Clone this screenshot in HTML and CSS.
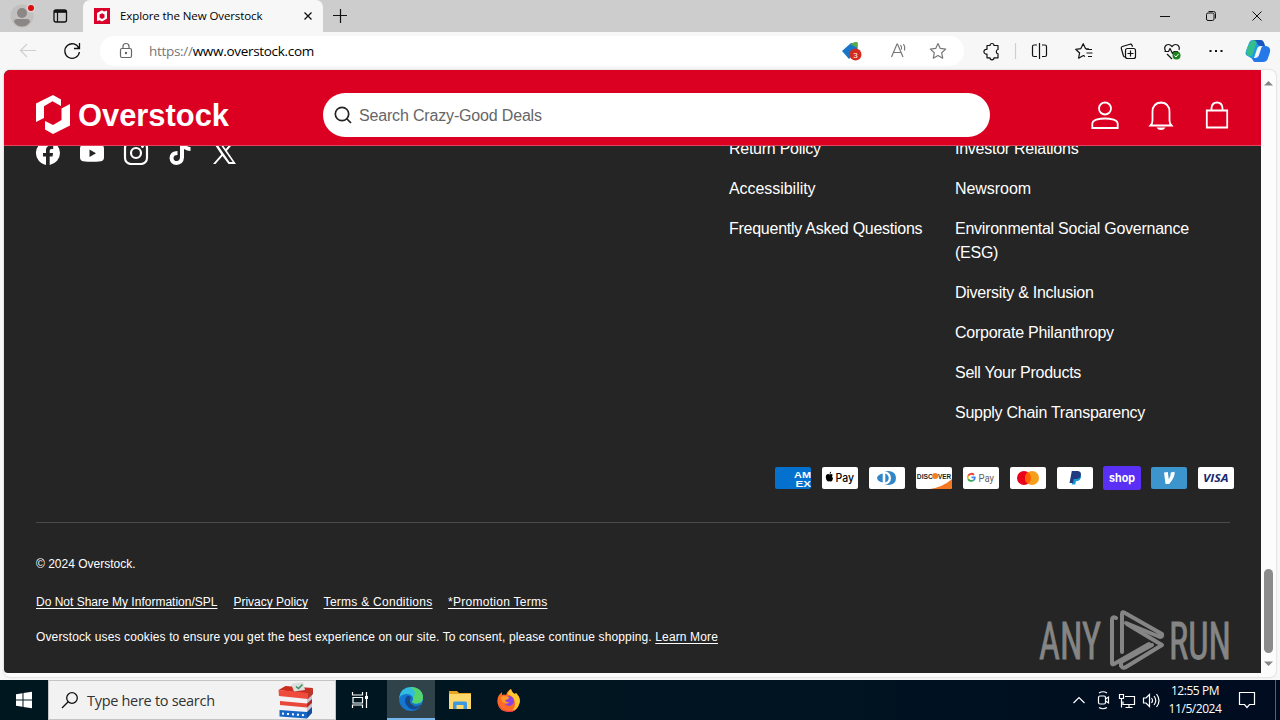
FILE: index.html
```html
<!DOCTYPE html>
<html lang="en">
<head>
    <meta charset="UTF-8">
    <meta name="viewport" content="width=device-width, initial-scale=1.0">
    <title>Explore the New Overstock</title>
    <link rel="stylesheet" href="styles.css">
</head>
<body>
    <div class="tab-strip">
        <svg class="profile" width="84" height="32" viewBox="0 0 84 32">
            <circle cx="22" cy="16" r="11.5" fill="#c2c0be"/>
            <circle cx="22" cy="13" r="5" fill="#8b8785"/>
            <path d="M14 22q0-3 3-3h10q3 0 3 3q-3 4.500-8 4.500t-8-4.500z" fill="#8b8785"/>
            <circle cx="31" cy="8" r="4.500" fill="#d6d4d3"/>
            <circle cx="31" cy="8" r="3" fill="#d80f12"/>
            <rect x="54" y="10" width="12.500" height="12" rx="2" fill="none" stroke="#111" stroke-width="1.300"/>
            <path d="M54 11.500h12.500" stroke="#111" stroke-width="2.600"/>
            <path d="M57.500 11v11" stroke="#111" stroke-width="1.200"/>
        </svg>
        <div class="tab">
            <svg width="16" height="16" viewBox="0 0 16 16">
                <rect width="16" height="16" fill="#d9002a"/>
                <path fill-rule="evenodd" d="M3 5l5-2.800 2 1.200 3-.7v7.800l-5 3-2.200-1.200-2.800.6zM8 5.200L5.600 6.600v3L8 11l2.500-1.400v-3z" fill="#fff"/>
            </svg>
            <span class="tab-title">Explore the New Overstock</span>
            <svg class="tab-close" width="10" height="10" viewBox="0 0 10 10"><path d="M1.500 1.500l7 7m0-7l-7 7" stroke="#111" stroke-width="1.300"/></svg>
        </div>
        <svg class="new-tab" width="14" height="14" viewBox="0 0 14 14"><path d="M0 6.500h14M7.500 0v14" stroke="#111" stroke-width="1.200"/></svg>
        <svg class="window-buttons" width="130" height="32" viewBox="1150 0 130 32" fill="none" stroke="#111">
            <path d="M1160 16.500h10M1252.500 11.500l9 9m0-9l-9 9"/>
            <rect x="1206.500" y="13" width="7.500" height="7.500" rx="1.500"/>
            <path d="M1208.500 11.500h5q2 0 2 2v5"/>
        </svg>
    </div>

    <div class="toolbar">
        <svg width="96" height="38" viewBox="0 32 96 38" fill="none">
            <path d="M36 50.500H21M27 44l-6.500 6.500L27 57" stroke="#cfcfcf" stroke-width="1.200"/>
            <path d="M79 48.500a7.300 7.300 0 1 0 .4 3.500M79.500 43v5.500H74" stroke="#111" stroke-width="1.300"/>
        </svg>
        <div class="address-bar">
            <svg class="lock" width="14" height="18" viewBox="0 0 14 18" fill="none" stroke="#666" stroke-width="1.200">
                <rect x="1.500" y="6.500" width="11" height="9" rx="1.500"/>
                <path d="M4 6.500V4.500a3 3 0 0 1 6 0v2"/>
                <circle cx="7" cy="11" r=".6" fill="#666"/>
            </svg>
            <span class="url"><span class="scheme">https://</span>www.overstock.com</span>
            <svg class="address-icons" width="124" height="30" viewBox="840 36 124 30" fill="none">
                <path d="M842 51l9-8h6.500v8l-8.500 8z" fill="#1875c9"/>
                <path d="M850 44l5-2h2.500v6z" fill="#59a94d"/>
                <circle cx="855.500" cy="54.500" r="6" fill="#d42b1e"/>
                <text x="855.500" y="58" class="badge-count">3</text>
                <path d="M891.500 57l5.500-13h.5l5.500 13M893.500 52.500h7.500M900.500 45q1.500 2 1 4.500M903.500 44q2 3 1 6.500" stroke="#777" stroke-width="1.200"/>
                <path d="M938 43.500l2.300 4.900 5.400.7-4 3.700 1 5.400-4.700-2.700-4.700 2.700 1-5.400-4-3.700 5.400-.7z" stroke="#777" stroke-width="1.200" stroke-linejoin="round"/>
            </svg>
        </div>
        <svg class="toolbar-icons" width="316" height="38" viewBox="964 32 316 38" fill="none" stroke="#111" stroke-width="1.200" stroke-linejoin="round">
            <path d="M987 45.500h3a2 2 0 0 1 4 0h4v4a2.200 2.200 0 0 0 0 4.300v4h-4a2 2 0 0 1-4 0h-3v-3.800a2.400 2.400 0 1 1 0-4.600z"/>
            <path d="M1015.500 43v16" stroke="#cfcfcf"/>
            <path d="M1037 45h-3q-1.500 0-1.500 1.500v8.500q0 1.500 1.500 1.500h3M1042 45h3q1.500 0 1.500 1.500v8.500q0 1.500-1.500 1.500h-3M1039.500 43v16"/>
            <path d="M1089 49l-3.500-.4-2.300-4.900-2.300 4.900-5.200.7 3.900 3.700-1 5.200 4.800-2.700 1.600 1M1086 49.500h6M1086.500 53h6M1088 56.500h4"/>
            <path d="M1126 57h-1q-1 0-1.500-1l-2.200-7.500q-.3-1.500 1-2l7.700-2.300q1.500-.3 2 1l.5 1.500"/>
            <rect x="1125.500" y="48.500" width="10" height="10" rx="2"/>
            <path d="M1130.500 50.500v6M1127.500 53.500h6"/>
            <path d="M1165.500 51q-2-4 1-6 3-1.500 5.500 1.500 2.500-3 5.500-1.500 2.500 1.500 1.500 5M1164.500 51.500h4l1.500-3 2.500 5 1.500-2h4M1167 54l5 5"/>
            <circle cx="1176.500" cy="55.500" r="4" fill="#1b8420" stroke="none"/>
            <path d="M1174.500 55.500l1.500 1.500 2.500-3" stroke="#fff" stroke-width="1"/>
            <path d="M1209.500 51h2M1215 51h2M1220.500 51h2" stroke-width="2"/>
            <g stroke="none">
                <path d="M1253 40h8q2 0 3 3l1 3h-4q-3 0-4 3l-3 9q-1 2-3 0l-5-3q-1-2 0-4l3-8q1-3 4-3z" fill="#1b9de2"/>
                <path d="M1247 48l3-5q1-3 4-3h5q-2 1-3 4l-4 12h-3q-4-1-2-8z" fill="#35bd8c"/>
                <path d="M1263 46h3q5 1 4 6l-2 6q-1 4-5 4h-8q-2 0-3-4h3q3 0 4-3l2-6q.5-3 2-3z" fill="#2478e8"/>
                <path d="M1253 40h7q3 0 4 3l1 3h-4q-3 0-4-3-1-3-4-3z" fill="#1b55bd"/>
            </g>
        </svg>
    </div>

    <div class="page-frame">
        <div class="page">
            <header class="site-header">
                <svg class="logo" width="200" height="44" viewBox="36 93 200 44" fill="#fff">
                    <path d="M36 103.500L53 95l8 4.500v6.500l-8.500-4.800-8.500 5V118l-8 4z"/>
                    <path d="M70 104v21.500L53 134l-8-4.500V121l8 4 8.500-5v-11.500z"/>
                    <text x="78" y="126" textLength="151" lengthAdjust="spacingAndGlyphs" class="logo-name">Overstock</text>
                </svg>
                <div class="search">
                    <svg width="18" height="18" viewBox="0 0 18 18" fill="none" stroke="#222" stroke-width="1.700"><circle cx="8" cy="8" r="6.700"/><path d="M12.500 12.500l4.500 4.500"/></svg>
                    <span>Search Crazy-Good Deals</span>
                </div>
                <svg class="header-icons" width="140" height="32" viewBox="1089 99 140 32" fill="none" stroke="#fff" stroke-width="1.800">
                    <circle cx="1105" cy="108.500" r="6"/>
                    <path d="M1092.300 128v-4q0-3 4-4.300 8.700-2.400 17.400 0 4 1.300 4 4.300v4z"/>
                    <path d="M1150.500 125.500q2-2 2-5V112q0-9 8.500-9.500 8.500.5 8.500 9.500v8.500q0 3 2 5z"/>
                    <path d="M1156.500 127.500h9q-1.500 2.500-4.500 2.500t-4.500-2.500z" fill="#fff" stroke="none"/>
                    <path d="M1206.800 110.500h20.400v17h-20.400zM1211.500 110v-2q.5-5.500 5.500-5.500t5.500 5.500v2"/>
                </svg>
            </header>
            <footer class="site-footer">
                <div class="footer-scroll">
                    <div class="footer-top">
                        <svg class="social" width="204" height="24" viewBox="36 141 204 24" fill="#fff">
                            <path d="M60 153a12 12 0 1 0-14 11.900v-8.400h-3V153h3v-2.700c0-3 1.800-4.700 4.600-4.700 1.300 0 2.600.3 2.600.3v3h-1.500c-1.500 0-2 .9-2 1.900v2.200h3.400l-.6 3.500h-2.800v8.400A12 12 0 0 0 60 153z"/>
                            <path fill-rule="evenodd" d="M83 144.700q9-1 18 0 3 .5 3 4v8.600q0 3.500-3 4-9 1-18 0-3-.5-3-4v-8.600q0-3.500 3-4zM89.500 149.500v7.500l6.500-3.700z"/>
                            <g fill="none" stroke="#fff" stroke-width="2.200"><rect x="125" y="142" width="22" height="22" rx="6"/><circle cx="136" cy="153" r="5"/></g>
                            <circle cx="142.500" cy="146.600" r="1.400"/>
                            <path d="M180 141h4q.5 5.500 6.500 6v4q-3.500 0-6.500-2v8.500q-.5 7-7.500 7.500-6.500-.5-7-7 .5-7 8-7v4q-4 0-4 3.200.3 2.800 3.200 2.800 3.300-.3 3.300-4z"/>
                            <path fill-rule="evenodd" d="M213 142h7.500l5.200 7 6.300-7h2.500l-7.600 8.700L236 164h-7.500l-6-7.900-7 7.900H213l8.300-9.500zM217 144l12.500 18h3.200L220 144z"/>
                        </svg>
                        <nav class="links links-help">
                            <a>Return Policy</a>
                            <a class="loose">Accessibility</a>
                            <a>Frequently Asked Questions</a>
                        </nav>
                        <nav class="links links-company">
                            <a>Investor Relations</a>
                            <a class="loose">Newsroom</a>
                            <a>Environmental Social Governance (ESG)</a>
                            <a>Diversity &amp; Inclusion</a>
                            <a>Corporate Philanthropy</a>
                            <a>Sell Your Products</a>
                            <a>Supply Chain Transparency</a>
                        </nav>
                    </div>
                    <div class="payments">
                        <svg viewBox="0 0 38 24"><rect x="1" y="1" width="36" height="22" rx="2" fill="#0571ce"/><g class="amex"><text x="20" y="11.500" textLength="17" lengthAdjust="spacingAndGlyphs">AM</text><text x="21.500" y="20.500" textLength="15.500" lengthAdjust="spacingAndGlyphs">EX</text></g></svg>
                        <svg viewBox="0 0 38 24"><rect x="1" y="1" width="36" height="22" rx="2" fill="#fff"/><path d="M8.700 8.500q1.500-1 3 .3-1.500 1.500.3 3.600-.8 3-2 3.200l-1.500-.4-1.500.4q-2-.8-2.200-4 0-3.500 2.200-3.500zM8.500 8q0-2 1.700-2.600.2 2-1.700 2.600z"/><text x="14.500" y="16" textLength="18.500" lengthAdjust="spacingAndGlyphs" class="apple-pay">Pay</text></svg>
                        <svg viewBox="0 0 38 24"><rect x="1" y="1" width="36" height="22" rx="2" fill="#fff"/><path d="M16 5h5q7 .8 7 7t-7 7h-5z" fill="#3086c8"/><circle cx="16" cy="12" r="7" fill="#fff"/><path d="M14.700 7.500v9q-5.600-1.500-5.600-4.500t5.600-4.500zM17.300 7.500v9q3.400-1.500 3.400-4.500t-3.400-4.500z" fill="#3086c8"/></svg>
                        <svg viewBox="0 0 38 24"><rect x="1" y="1" width="36" height="22" rx="2" fill="#fff"/><path d="M37 13v8q0 2-2 2H15q13-2 22-10z" fill="#f47721"/><text x="1.800" y="12.500" textLength="16" lengthAdjust="spacingAndGlyphs" class="discover">DISC</text><circle cx="20.200" cy="10" r="3" fill="#f48120"/><text x="23" y="12.500" textLength="13.200" lengthAdjust="spacingAndGlyphs" class="discover">VER</text></svg>
                        <svg viewBox="0 0 38 24"><rect x="1" y="1" width="36" height="22" rx="2" fill="#fff"/><g fill="none" stroke-width="1.800"><path d="M12 8.800A3.700 3.700 0 0 0 6.200 9.700" stroke="#e94235"/><path d="M6.200 9.500a3.700 3.700 0 0 0 0 3.800" stroke="#fabb05"/><path d="M6.200 13.200a3.700 3.700 0 0 0 5.500.9" stroke="#34a853"/><path d="M11.700 14.200q1.200-1.200 1.100-2.800H9.500" stroke="#4285f4"/></g><text x="16.500" y="15.500" textLength="15.500" lengthAdjust="spacingAndGlyphs" class="google-pay">Pay</text></svg>
                        <svg viewBox="0 0 38 24"><rect x="1" y="1" width="36" height="22" rx="2" fill="#fff"/><circle cx="15" cy="12" r="7" fill="#eb001b"/><circle cx="23" cy="12" r="7" fill="#f79e1b"/><path d="M19 6.300a7 7 0 0 1 0 11.400 7 7 0 0 1 0-11.400z" fill="#ff5f00"/></svg>
                        <svg viewBox="0 0 38 24"><rect x="1" y="1" width="36" height="22" rx="2" fill="#fff"/><path d="M17 8h6q3 1 1.500 4.500-1 2.700-4.500 2.700l-.8 3.300h-3.500z" fill="#179bd7"/><path d="M15.800 5h6q4 .5 3 4.500-.8 3.500-5 3.500h-2l-.8 4h-3.500z" fill="#203b80"/></svg>
                        <svg viewBox="0 0 38 24"><rect width="38" height="24" rx="2.500" fill="#5a31f4"/><text x="6" y="15.500" textLength="26" lengthAdjust="spacingAndGlyphs" class="shop-pay">shop</text></svg>
                        <svg viewBox="0 0 38 24"><rect x="1" y="1" width="36" height="22" rx="2" fill="#3d95ce"/><path d="M14 6.500l3.800-.5 1 7.500q2-3.500 2-7l3.800-.7q.9 5-5.400 12.200h-3.700z" fill="#fff"/></svg>
                        <svg viewBox="0 0 38 24"><rect x="1" y="1" width="36" height="22" rx="2" fill="#fff"/><text x="6" y="16" textLength="25.500" lengthAdjust="spacingAndGlyphs" class="visa">VISA</text></svg>
                    </div>
                    <div class="legal">
                        <p class="copyright">© 2024 Overstock.</p>
                        <p class="legal-links"><a>Do Not Share My Information/SPL</a><a>Privacy Policy</a><a class="wide">Terms &amp; Conditions</a><a class="wide">*Promotion Terms</a></p>
                        <p class="cookies">Overstock uses cookies to ensure you get the best experience on our site. To consent, please continue shopping. <a>Learn More</a></p>
                    </div>
                </div>
            </footer>
            <svg class="watermark" width="200" height="64" viewBox="1035 609 200 64" fill="none" stroke="#858585" stroke-width="4">
                <text x="1039" y="659" textLength="62" lengthAdjust="spacingAndGlyphs">ANY</text>
                <g stroke-linejoin="round" stroke-linecap="round">
                    <path d="M1116 618q-4-2-4 2v43q0 2 2 1l35-20"/>
                    <path d="M1122 652v-38q0-3 3-1l37 21q1 3-2 3l-34-14"/>
                    <path d="M1127 624l35 21-36 22q-3 2-5-1v-4l31-17"/>
                </g>
                <text x="1169" y="659" textLength="62" lengthAdjust="spacingAndGlyphs">RUN</text>
            </svg>
        </div>
        <div class="scrollbar">
            <svg width="9" height="6" viewBox="0 0 9 6"><path d="M0 5.500L4.500 1 9 5.500z" fill="#858585"/></svg>
            <div class="scroll-thumb"></div>
            <svg width="9" height="6" viewBox="0 0 9 6"><path d="M0 .5L4.500 5 9 .5z" fill="#858585"/></svg>
        </div>
    </div>

    <div class="taskbar">
        <svg width="48" height="40" viewBox="0 0 48 40" fill="#fff"><path d="M16 14.200l6.500-1v6.300H16zM23.500 13l8.500-1.200v7.700h-8.500zM16 20.500h6.500v6.300l-6.500-1zM23.500 20.500H32v7.700L23.500 27z"/></svg>
        <div class="taskbar-search">
            <svg width="18" height="18" viewBox="0 0 18 18" fill="none" stroke="#111" stroke-width="1.300"><circle cx="11" cy="7" r="5.300"/><path d="M7.200 10.800L1 17"/></svg>
            <span>Type here to search</span>
            <svg class="ballot" width="38" height="38" viewBox="277 681 38 38">
                <path d="M280 695l27 2v21l-27-2z" fill="#f4f1f5"/>
                <path d="M307 697l5-5v20l-5 6z" fill="#c9c3d2"/>
                <path d="M278.500 690l7-4 27.500 2-5 6z" fill="#cb2e20"/>
                <path d="M278.500 690l29.500 3v6l-29-3z" fill="#ef4b3c"/>
                <path d="M308 693l5-5v6l-5 5z" fill="#b8362b"/>
                <path d="M280 701l27 2.500v4L280 705z" fill="#e8473a"/>
                <path d="M307 703.500l5-4.500v4l-5 4.500z" fill="#a92d24"/>
                <path d="M279.500 710l27.500 2v6.500l-27.500-2z" fill="#1765c5"/>
                <path d="M307 712l5-5v6l-5 5.500z" fill="#12509f"/>
                <path d="M282 713.500l23 1.800" stroke="#fff" stroke-width="2" stroke-dasharray="2 3"/>
                <path d="M291 684l12-2 2 8-11 1.500z" fill="#ddd"/>
                <path d="M296 686.500l2.500 2 4-4" fill="none" stroke="#31965a" stroke-width="1.500"/>
            </svg>
        </div>
        <svg width="48" height="40" viewBox="336 680 48 40" fill="none" stroke="#fff" stroke-width="1.200"><path d="M352.500 692v3h10v-3M352.500 708v-3h10v3M353 697.500h9.500v5.500H353zM366.500 692v16"/><path d="M365 697.500h3" stroke-width="3"/></svg>
        <div class="task-active">
            <svg width="26" height="26" viewBox="0 0 26 26">
                <circle cx="13" cy="13" r="12" fill="#1677cf"/>
                <path d="M1 12Q3 1 13 1q11 .5 12 10 0 6.500-6 6.500-5 0-5-2 2-2 1-4-2-4-7-3.500-5 .5-7 4z" fill="#31bde0"/>
                <path d="M12 1q12 0 13 10 0 6.500-6 6.500-5 0-5-2 2-2 1-4Q20 6 12 1z" fill="#55d46b"/>
                <path d="M8 11q-3 6 3 11 5 3.500 11-1.500-7 1.500-10-3-2-3 1-7-3-1-5 .5z" fill="#104a96"/>
                <path d="M14 11q-4 3-1 7 4 4 10.500.5l-1 2Q14 22 10.500 17q-1.500-4 3.500-6z" fill="#30434b"/>
            </svg>
        </div>
        <svg width="98" height="40" viewBox="435 680 98 40">
            <path d="M449 691h8l2 2h12v16h-22z" fill="#e9a520"/>
            <path d="M449 694h22v15h-22z" fill="#ffd86b"/>
            <path d="M453 709v-6q0-1.500 1.500-1.500h11q1.500 0 1.500 1.500v6h-3.500v-4h-7v4z" fill="#3d98df"/>
            <path d="M499 695l3-3v3q2-1 4 0 1-4 5-6 1 4 4 5l1-1q5 5 3.500 10-2 9-11 9-9.500-.5-11-9-.5-5 1.500-8z" fill="#ff6a26"/>
            <path d="M511 689q1 4 4 5l1-1q5 5 3.500 10-2 7-8 8.500 5-5 3-11-2-5-7-6 1-4 3.500-5.500z" fill="#ffc62e"/>
            <path d="M498 701q2 10 11 10 6 0 9-4-3 5-9 5-9.500-.5-11-11z" fill="#ed2c60"/>
            <circle cx="509" cy="701" r="5" fill="#8b42e1"/>
            <path d="M501 697q4-2 8 0 0 3-4 3 1 3 5 2-3 3-6 1t-3-6z" fill="#ff9a24"/>
        </svg>
        <svg class="tray" width="92" height="40" viewBox="1069 680 92 40" fill="none" stroke="#fff" stroke-width="1.200">
            <path d="M1073.500 703l5.500-5.500 5.500 5.500"/>
            <rect x="1098.500" y="696" width="7" height="8" rx="1.500"/><path d="M1105.500 699l3-2v6l-3-2M1099 693q4-2.500 8 0M1099 707.500q4 2.500 8 0"/>
            <path d="M1125 696.500h9.500v8H1123v-3M1129 704.500v3M1125.500 707.500h7M1119.500 694.500h4v4h-4zM1121.500 698.500v9"/>
            <path d="M1143.500 698h2.500l3.500-3.500v12L1146 703h-2.500zM1151.500 698q2 2.500 0 5M1154 696q3.500 4.500 0 9M1156.500 694q5 6.500 0 13"/>
        </svg>
        <div class="clock"><span>12:55 PM</span><span>11/5/2024</span></div>
        <svg width="55" height="40" viewBox="1225 680 55 40" fill="none" stroke="#fff" stroke-width="1.200"><path d="M1239.500 692.500h15v12h-5l-2.500 3-2.500-3h-5z"/><path d="M1275.500 680v40" stroke="#56606f" stroke-width="1"/></svg>
    </div>
</body>
</html>
```
FILE: styles.css
```css
* {
    box-sizing: border-box;
}
body {
    margin: 0;
    width: 1280px;
    height: 720px;
    overflow: hidden;
    display: flex;
    flex-direction: column;
    font-family: "Liberation Sans", Arial, sans-serif;
    background: #f7f7f7;
}
svg {
    display: block;
    flex: none;
}
p {
    margin: 0;
}

/* browser tabs */
.tab-strip {
    height: 32px;
    display: flex;
    align-items: center;
    background: #cdcdcd;
}
.tab {
    width: 240px;
    height: 32px;
    margin-left: -1px;
    padding: 0 10px 0 11px;
    display: flex;
    align-items: center;
    background: #f7f7f7;
    border-radius: 7px 7px 0 0;
}
.tab-title {
    margin-left: 10px;
    padding-bottom: 2px;
    font: 11.5px "Open Sans", sans-serif;
    letter-spacing: -0.1px;
    white-space: nowrap;
}
.tab-close {
    margin-left: auto;
}
.new-tab {
    margin-left: 10px;
}
.window-buttons {
    margin-left: auto;
}

/* address row */
.toolbar {
    height: 38px;
    display: flex;
    align-items: center;
}
.address-bar {
    width: 864px;
    height: 30px;
    margin-left: 4px;
    padding-left: 19px;
    display: flex;
    align-items: center;
    background: #fff;
    border-radius: 15px;
}
.url {
    margin-left: 16px;
    font: 13.5px "Open Sans", sans-serif;
    letter-spacing: -0.3px;
}
.scheme {
    color: #777;
}
.address-icons {
    margin-left: auto;
}
.badge-count {
    font: 8px "Liberation Sans", sans-serif;
    fill: #fff;
    text-anchor: middle;
}

/* web page */
.page-frame {
    height: 607px;
    margin: 0 4px 3px;
    display: flex;
    background: #fcfcfc;
    border-radius: 6px;
    box-shadow: 0 0 2px #bbb;
}
.page {
    position: relative;
    width: 1257px;
    height: 603px;
    display: flex;
    flex-direction: column;
    overflow: hidden;
    background: #252525;
    border-radius: 6px 0 0 4px;
}
.site-header {
    height: 76px;
    padding: 14px 32px 0;
    display: flex;
    align-items: center;
    background: #db0022;
    border-bottom: 1px solid #e0455d;
}
.logo-name {
    font: bold 31px "Liberation Sans", sans-serif;
}
.search {
    width: 667px;
    height: 44px;
    margin-left: 87px;
    padding-left: 11px;
    display: flex;
    align-items: center;
    gap: 7px;
    border-radius: 22px;
    background: #fff;
    color: #666;
    font-size: 16px;
    letter-spacing: -0.17px;
}
.search span {
    padding-top: 2px;
}
.header-icons {
    margin-left: auto;
}
.site-footer {
    flex: 1;
    overflow: hidden;
    color: #fff;
}
.footer-scroll {
    margin-top: -10px;
    padding: 0 31px 0 32px;
}
.footer-top {
    height: 288px;
    display: flex;
}
.social {
    margin-top: 5px;
}
.links {
    margin-top: 1px;
    display: flex;
    flex-direction: column;
    gap: 16px;
    font-size: 16px;
    line-height: 24px;
    letter-spacing: -0.26px;
}
.links .loose {
    letter-spacing: -0.05px;
}
.links-help {
    width: 226px;
    margin-left: 489px;
}
.links-company {
    width: 260px;
}
.payments {
    margin: 42px -5px 0 0;
    display: flex;
    justify-content: flex-end;
    gap: 9px;
}
.payments svg {
    width: 38px;
    height: 24px;
}
.amex {
    font: bold 9.5px "Liberation Sans", sans-serif;
    fill: #fff;
}
.apple-pay {
    font: 500 11.5px Inter, sans-serif;
}
.discover {
    font: bold 7.5px "Liberation Sans", sans-serif;
    fill: #231f20;
}
.google-pay {
    font: 11px Roboto, sans-serif;
    fill: #5f6368;
}
.shop-pay {
    font: bold 11.5px Inter, sans-serif;
    fill: #fff;
}
.visa {
    font: italic bold 11px "Open Sans", sans-serif;
    fill: #182a70;
}
.legal {
    margin-top: 32px;
    padding-top: 32px;
    border-top: 1px solid #4b4b4b;
    font-size: 12px;
    line-height: 18px;
}
.legal a {
    text-decoration: underline;
    text-underline-offset: 2px;
}
.legal-links {
    margin-top: 20px;
    display: flex;
    gap: 16px;
}
.legal-links .wide {
    letter-spacing: 0.27px;
    margin-left: -0.5px;
}
.cookies {
    margin-top: 17px;
    letter-spacing: 0.135px;
}
.watermark {
    position: absolute;
    left: 1031px;
    top: 539px;
}
.watermark text {
    font: 52px "Roboto Condensed", Roboto, sans-serif;
    fill: #858585;
    stroke-width: 0.8px;
}
.scrollbar {
    width: 15px;
    height: 603px;
    padding: 10px 0 6px;
    display: flex;
    flex-direction: column;
    align-items: center;
}
.scroll-thumb {
    width: 9px;
    height: 84px;
    margin: auto 0 8px;
    border-radius: 5px;
    background: #8b8b8b;
}

/* windows taskbar */
.taskbar {
    height: 40px;
    display: flex;
    background: linear-gradient(90deg, #001720, #001521 60%, #000b20);
}
.taskbar-search {
    width: 288px;
    padding: 0 20px 0 12px;
    display: flex;
    align-items: center;
    background: #f2f2f2;
    border: 1px solid #c5c5c5;
    color: #333;
    font: 14.5px "Open Sans", sans-serif;
}
.taskbar-search span {
    margin-left: 8px;
    letter-spacing: -0.3px;
}
.ballot {
    margin-left: auto;
}
.task-active {
    width: 48px;
    margin-left: 3px;
    display: flex;
    align-items: center;
    justify-content: center;
    background: #30434b;
    border-bottom: 2px solid #75b6ed;
}
.tray {
    margin-left: auto;
}
.clock {
    width: 64px;
    padding: 2px 0 0 4px;
    display: flex;
    flex-direction: column;
    align-items: center;
    color: #fff;
    font: 12px/18px "Open Sans", sans-serif;
    letter-spacing: -0.45px;
}
```
